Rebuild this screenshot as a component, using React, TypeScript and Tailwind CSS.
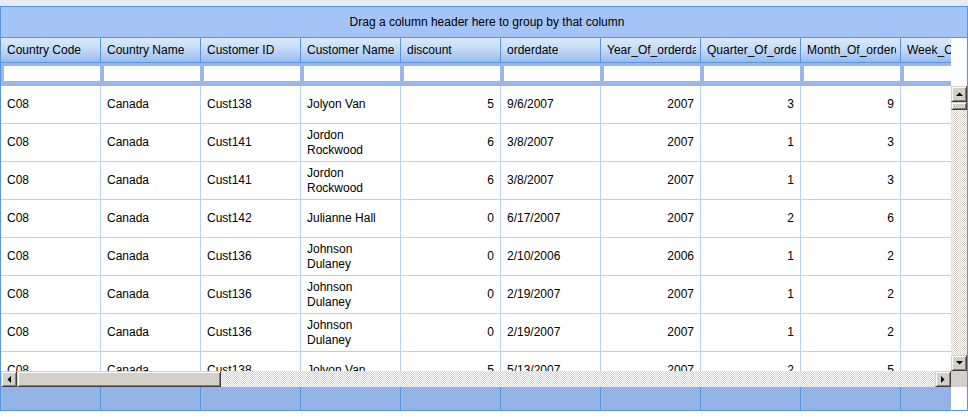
const columns = [
  { name: 'Country Code', right: false },
  { name: 'Country Name', right: false },
  { name: 'Customer ID', right: false },
  { name: 'Customer Name', right: false },
  { name: 'discount', right: true },
  { name: 'orderdate', right: false },
  { name: 'Year_Of_orderdate', right: true },
  { name: 'Quarter_Of_orderdate', right: true },
  { name: 'Month_Of_orderdate', right: true },
  { name: 'Week_Of_orderdate', right: true },
]

const rows = [
  ['C08', 'Canada', 'Cust138', 'Jolyon Van', '5', '9/6/2007', '2007', '3', '9', ''],
  ['C08', 'Canada', 'Cust141', 'Jordon Rockwood', '6', '3/8/2007', '2007', '1', '3', ''],
  ['C08', 'Canada', 'Cust141', 'Jordon Rockwood', '6', '3/8/2007', '2007', '1', '3', ''],
  ['C08', 'Canada', 'Cust142', 'Julianne Hall', '0', '6/17/2007', '2007', '2', '6', ''],
  ['C08', 'Canada', 'Cust136', 'Johnson Dulaney', '0', '2/10/2006', '2006', '1', '2', ''],
  ['C08', 'Canada', 'Cust136', 'Johnson Dulaney', '0', '2/19/2007', '2007', '1', '2', ''],
  ['C08', 'Canada', 'Cust136', 'Johnson Dulaney', '0', '2/19/2007', '2007', '1', '2', ''],
  ['C08', 'Canada', 'Cust138', 'Jolyon Van', '5', '5/13/2007', '2007', '2', '5', ''],
]

type Dir = 'up' | 'down' | 'left' | 'right'

function Arrow({ dir }: { dir: Dir }) {
  const pts = {
    up: '0,4 7,4 3.5,0.5',
    down: '0,0 7,0 3.5,3.5',
    left: '4,0 4,7 0.5,3.5',
    right: '0,0 0,7 3.5,3.5',
  }[dir]
  const vertical = dir === 'up' || dir === 'down'
  return (
    <svg width={vertical ? 7 : 4} height={vertical ? 4 : 7} viewBox={vertical ? '0 0 7 4' : '0 0 4 7'}>
      <polygon points={pts} fill="#000" />
    </svg>
  )
}

// classic 3d scrollbar button
function SBtn({ dir }: { dir: Dir }) {
  return (
    <div className="flex h-[16px] w-[16px] shrink-0 items-center justify-center border-t border-l border-r border-b border-t-[#d4d0c8] border-l-[#d4d0c8] border-r-[#404040] border-b-[#404040] bg-[#d4d0c8] shadow-[inset_1px_1px_#ffffff,inset_-1px_-1px_#808080]">
      <Arrow dir={dir} />
    </div>
  )
}

const track = 'bg-[repeating-conic-gradient(#d4d0c8_0_25%,#ffffff_0_50%)] bg-[length:2px_2px]'
const thumb = 'border border-t-[#d4d0c8] border-l-[#d4d0c8] border-r-[#404040] border-b-[#404040] bg-[#d4d0c8] shadow-[inset_1px_1px_#ffffff,inset_-1px_-1px_#808080]'

export default function App() {
  return (
    <div className="h-[417px] w-[968px] overflow-hidden bg-white font-['Liberation_Sans',Arial,sans-serif] text-[12px] text-black">
      <div className="h-[6px] bg-[#e8ebf1]" />
      <div className="flex h-[405px] flex-col border border-[#5794e4]">
        {/* group by panel */}
        <div className="flex h-[31px] shrink-0 items-center justify-center border-b border-[#5794e4] bg-[#a4c4f7] pl-[6px]">
          Drag a column header here to group by that column
        </div>

        {/* header */}
        <div className="flex h-[25px] shrink-0">
          <div className="flex w-[950px] overflow-hidden">
            {columns.map((c) => (
              <div
                key={c.name}
                className="flex h-[25px] w-[100px] shrink-0 items-center border-r border-b border-[#5794e4] bg-linear-to-b from-[#dde9fc] via-[#c3d8f8] to-[#98b9ed] pl-[6px] pr-[4px]"
              >
                <span className="overflow-hidden whitespace-nowrap">{c.name}</span>
              </div>
            ))}
          </div>
        </div>

        {/* filter row */}
        <div className="flex h-[23px] shrink-0">
          <div className="flex w-[950px] overflow-hidden bg-[#98b8ec]">
            {columns.map((c) => (
              <div key={c.name} className="h-[23px] w-[100px] shrink-0 pt-[3px] pl-[3px]">
                <div className="h-[15px] w-[96px] bg-white" />
              </div>
            ))}
          </div>
        </div>

        {/* body */}
        <div className="flex h-[285px] shrink-0">
          <div className="h-[285px] w-[950px] overflow-hidden">
            {rows.map((r, i) => (
              <div key={i} className="flex h-[38px] w-[1000px] border-b border-[#b9d0f4]">
                {r.map((v, j) => (
                  <div
                    key={j}
                    className={`flex w-[100px] shrink-0 items-center border-r border-[#b9d0f4] px-[6px] leading-[15px] ${columns[j].right ? 'justify-end text-right' : ''}`}
                  >
                    {v}
                  </div>
                ))}
              </div>
            ))}
          </div>
          <div className={`flex w-[16px] flex-col ${track}`}>
            <SBtn dir="up" />
            <div className={`h-[8px] w-[16px] ${thumb}`} />
            <div className="flex-1" />
            <SBtn dir="down" />
          </div>
        </div>

        {/* horizontal scrollbar */}
        <div className="flex h-[16px] shrink-0">
          <div className={`flex w-[950px] ${track}`}>
            <SBtn dir="left" />
            <div className={`h-[16px] w-[204px] ${thumb}`} />
            <div className="flex-1" />
            <SBtn dir="right" />
          </div>
          <div className="w-[16px] bg-[#d4d0c8]" />
        </div>

        {/* footer */}
        <div className="flex h-[23px] shrink-0">
          <div className="flex w-[950px] overflow-hidden bg-[#94b4e8]">
            {columns.map((c) => (
              <div key={c.name} className="h-[23px] w-[100px] shrink-0 border-r border-[#5794e4]" />
            ))}
          </div>
        </div>
      </div>
    </div>
  )
}
